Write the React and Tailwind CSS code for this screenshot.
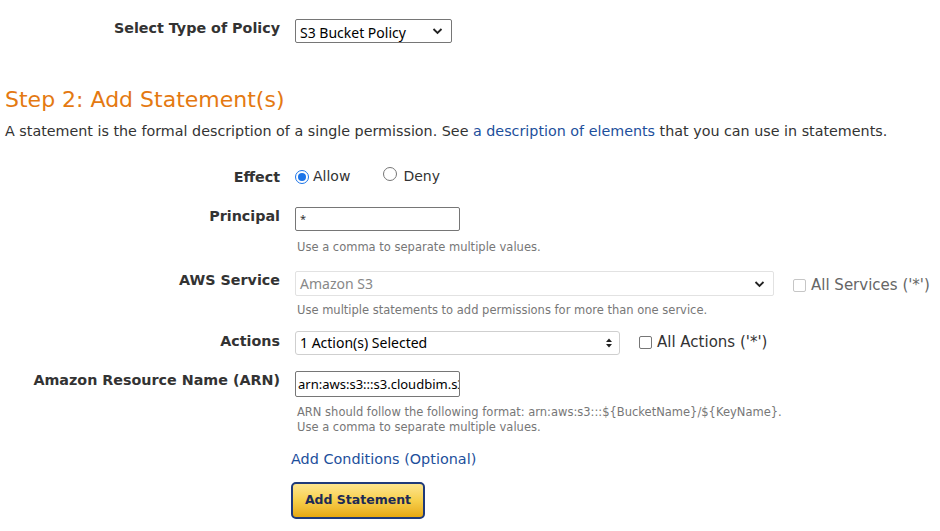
import React from "react";

const labelCls =
  "w-[280px] shrink-0 text-right font-bold text-[14.3px] leading-[18px] text-[#333]";
const helpCls = "text-[11.5px] text-[#777] leading-[15px]";
const fieldFont = { fontFamily: '"Noto Sans", "Open Sans", sans-serif' };

function Chevron() {
  return (
    <svg width="11" height="8" viewBox="0 0 11 8" className="absolute right-[8px] top-1/2 -translate-y-1/2">
      <path d="M1.5 2 L5.5 6 L9.5 2" fill="none" stroke="#222" strokeWidth="1.8" />
    </svg>
  );
}

function UpDown() {
  return (
    <svg width="8" height="11" viewBox="0 0 8 11" className="absolute right-[6px] top-1/2 -translate-y-1/2">
      <path d="M1 4.5 L4 1 L7 4.5 Z" fill="#222" />
      <path d="M1 6.5 L4 10 L7 6.5 Z" fill="#222" />
    </svg>
  );
}

function Radio({ checked }) {
  return (
    <span
      className={
        "inline-flex h-[14px] w-[14px] items-center justify-center rounded-full border " +
        (checked ? "border-[#1a73e8]" : "border-[#767676]")
      }
    >
      {checked && <span className="h-[8px] w-[8px] rounded-full bg-[#1a73e8]" />}
    </span>
  );
}

function Check({ disabled }) {
  return (
    <span
      className={
        "inline-block h-[13px] w-[13px] rounded-[2px] border bg-white " +
        (disabled ? "border-[#c6c6c6]" : "border-[#767676]")
      }
    />
  );
}

export default function App() {
  return (
    <div
      className="min-h-[531px] w-[940px] bg-white text-[#333]"
      style={{ fontFamily: '"DejaVu Sans", Verdana, sans-serif' }}
    >
      {/* Policy type */}
      <div className="flex items-start pt-[19px]">
        <div className={labelCls}>Select Type of Policy</div>
        <div className="ml-[15px]">
          <div
            className="relative flex h-[24px] w-[157px] items-center border border-[#767676] rounded-[2px] pl-[4px] pt-[2px] text-[14px] text-black"
            style={fieldFont}
          >
            S3 Bucket Policy
            <Chevron />
          </div>
        </div>
      </div>

      {/* Step 2 */}
      <div className="px-[5px] pt-[44px]">
        <h2 className="text-[22px] leading-[26px] text-[#e47911] font-normal">Step 2: Add Statement(s)</h2>
        <p className="mt-[9px] text-[14.3px] leading-[18px] text-[#333]">
          A statement is the formal description of a single permission. See{" "}
          <span className="text-[#1d4f9c]">a description of elements</span> that you can use in statements.
        </p>
      </div>

      {/* Effect */}
      <div className="mt-[26px] flex items-center">
        <div className={labelCls}>Effect</div>
        <div className="ml-[15px] flex items-center text-[14px]">
          <Radio checked />
          <span className="ml-[4px]">Allow</span>
          <span className="ml-[33px]">
            <Radio />
          </span>
          <span className="ml-[6px]">Deny</span>
        </div>
      </div>

      {/* Principal */}
      <div className="mt-[20px] flex items-start">
        <div className={labelCls}>Principal</div>
        <div className="ml-[15px]">
          <div className="flex h-[24px] w-[165px] items-center border border-[#767676] rounded-[2px] pl-[4px] text-[11px]" style={fieldFont}>
            *
          </div>
          <div className={helpCls + " mt-[9px] ml-[2px]"}>Use a comma to separate multiple values.</div>
        </div>
      </div>

      {/* AWS Service */}
      <div className="mt-[16px] flex items-start">
        <div className={labelCls}>AWS Service</div>
        <div className="ml-[15px]">
          <div className="flex items-center">
            <div
              className="relative flex h-[25px] w-[479px] items-center border border-[#e2e2e2] rounded-[2px] pl-[4px] text-[14px] text-[#888]"
              style={fieldFont}
            >
              Amazon S3
              <Chevron />
            </div>
            <span className="ml-[19px] mt-[3px] flex items-center text-[15px] text-[#666]">
              <Check disabled />
              <span className="ml-[5px]">All Services ('*')</span>
            </span>
          </div>
          <div className={helpCls + " mt-[6px] ml-[2px]"}>Use multiple statements to add permissions for more than one service.</div>
        </div>
      </div>

      {/* Actions */}
      <div className="mt-[13px] flex items-start">
        <div className={labelCls + " pt-[1px]"}>Actions</div>
        <div className="ml-[15px] flex items-center">
          <div
            className="relative flex h-[24px] w-[325px] items-center border border-[#cfcfcf] rounded-[3px] pl-[4px] text-[14px] text-black"
            style={fieldFont}
          >
            1 Action(s) Selected
            <UpDown />
          </div>
          <span className="ml-[19px] flex items-center text-[15px] text-[#333]">
            <Check />
            <span className="ml-[5px]">All Actions ('*')</span>
          </span>
        </div>
      </div>

      {/* ARN */}
      <div className="mt-[16px] flex items-start">
        <div className={labelCls}>Amazon Resource Name (ARN)</div>
        <div className="ml-[15px]">
          <input
            readOnly
            value="arn:aws:s3:::s3.cloudbim.s3"
            className="block h-[26px] w-[165px] border border-[#767676] rounded-[2px] pl-[2px] text-[13px] text-black outline-none"
            style={fieldFont}
          />
          <div className={helpCls + " mt-[8px] ml-[2px]"}>
            ARN should follow the following format: arn:aws:s3:::$&#123;BucketName&#125;/$&#123;KeyName&#125;.
            <br />
            Use a comma to separate multiple values.
          </div>
        </div>
      </div>

      {/* Conditions + button */}
      <div className="ml-[291px] mt-[15px]">
        <div className="text-[14.4px] leading-[18px] text-[#1d4f9c]">Add Conditions (Optional)</div>
        <button className="mt-[14px] h-[37px] w-[134px] rounded-[5px] border-2 border-[#1f3a7a] bg-gradient-to-b from-[#fde58d] via-[#f7cf4a] to-[#e7a90c] text-[12.5px] font-bold text-[#1c2a56]">
          Add Statement
        </button>
      </div>
    </div>
  );
}
